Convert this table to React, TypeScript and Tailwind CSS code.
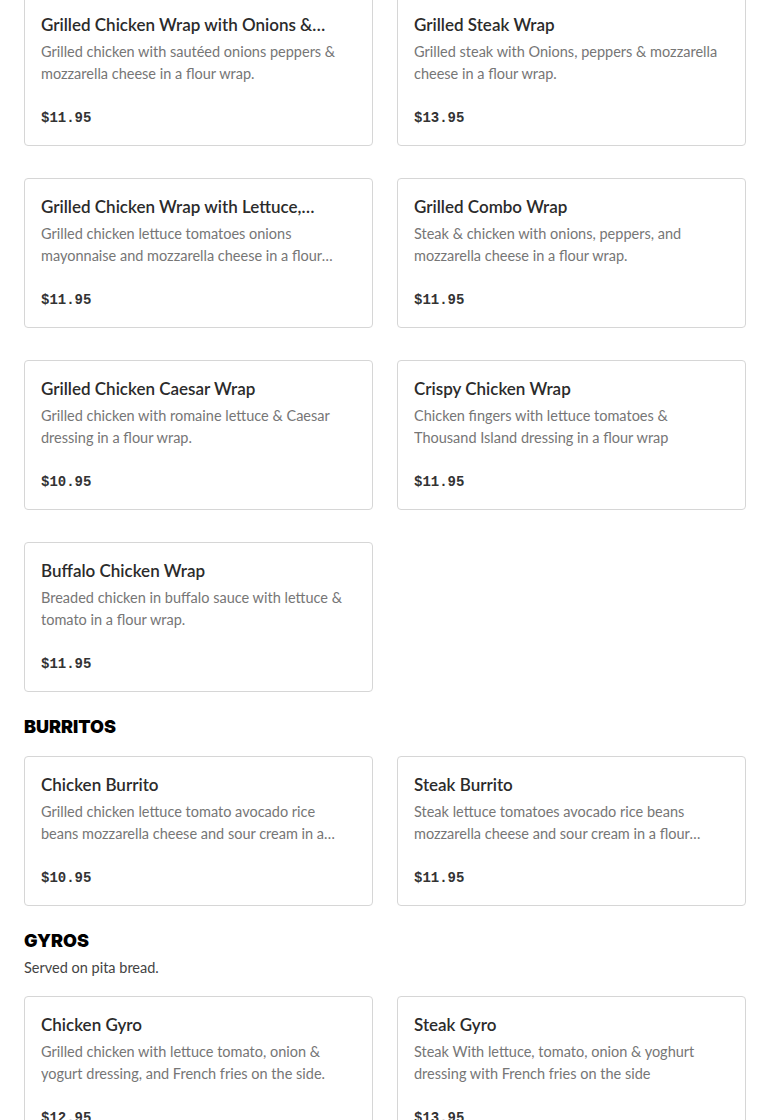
type Item = { name: string; desc: string; price: string };

const wraps: Item[] = [
  { name: 'Grilled Chicken Wrap with Onions & Peppers', desc: 'Grilled chicken with sautéed onions peppers & mozzarella cheese in a flour wrap.', price: '$11.95' },
  { name: 'Grilled Steak Wrap', desc: 'Grilled steak with Onions, peppers & mozzarella cheese in a flour wrap.', price: '$13.95' },
  { name: 'Grilled Chicken Wrap with Lettuce, Tomatoes & Onions', desc: 'Grilled chicken lettuce tomatoes onions mayonnaise and mozzarella cheese in a flour wrap.', price: '$11.95' },
  { name: 'Grilled Combo Wrap', desc: 'Steak & chicken with onions, peppers, and mozzarella cheese in a flour wrap.', price: '$11.95' },
  { name: 'Grilled Chicken Caesar Wrap', desc: 'Grilled chicken with romaine lettuce & Caesar dressing in a flour wrap.', price: '$10.95' },
  { name: 'Crispy Chicken Wrap', desc: 'Chicken fingers with lettuce tomatoes & Thousand Island dressing in a flour wrap', price: '$11.95' },
  { name: 'Buffalo Chicken Wrap', desc: 'Breaded chicken in buffalo sauce with lettuce & tomato in a flour wrap.', price: '$11.95' },
];

const burritos: Item[] = [
  { name: 'Chicken Burrito', desc: 'Grilled chicken lettuce tomato avocado rice beans mozzarella cheese and sour cream in a flour tortilla.', price: '$10.95' },
  { name: 'Steak Burrito', desc: 'Steak lettuce tomatoes avocado rice beans mozzarella cheese and sour cream in a flour tortilla.', price: '$11.95' },
];

const gyros: Item[] = [
  { name: 'Chicken Gyro', desc: 'Grilled chicken with lettuce tomato, onion & yogurt dressing, and French fries on the side.', price: '$12.95' },
  { name: 'Steak Gyro', desc: 'Steak With lettuce, tomato, onion & yoghurt dressing with French fries on the side', price: '$13.95' },
];

function Card({ item }: { item: Item }) {
  return (
    <div className="border border-[#d6d6d6] rounded-[4px] bg-white p-4">
      <div className="text-[17px] leading-6 font-semibold text-[#2b2b2b] line-clamp-1">{item.name}</div>
      <div className="mt-1 text-[14.5px] leading-[22px] text-[#767676] line-clamp-2">{item.desc}</div>
      <div className="mt-[22px] text-[14px] leading-[22px] font-bold text-[#333] font-['Liberation_Mono',monospace]">{item.price}</div>
    </div>
  );
}

function Grid({ items }: { items: Item[] }) {
  return (
    <div className="grid grid-cols-2 gap-x-6 gap-y-8">
      {items.map((it) => (
        <Card key={it.name} item={it} />
      ))}
    </div>
  );
}

export default function App() {
  return (
    <div className="bg-white min-h-screen px-6 -mt-1 font-['Lato',sans-serif]">
      <Grid items={wraps} />
      <section className="mt-[23px]">
        <h2 className="text-[18px] leading-6 font-black text-black uppercase font-['Inter',sans-serif]">Burritos</h2>
        <div className="mt-[17px]">
          <Grid items={burritos} />
        </div>
      </section>
      <section className="mt-[23px]">
        <h2 className="text-[18px] leading-6 font-black text-black uppercase font-['Inter',sans-serif]">Gyros</h2>
        <p className="mt-1 text-[14.5px] leading-[22px] text-[#444]">Served on pita bread.</p>
        <div className="mt-[17px]">
          <Grid items={gyros} />
        </div>
      </section>
    </div>
  );
}
